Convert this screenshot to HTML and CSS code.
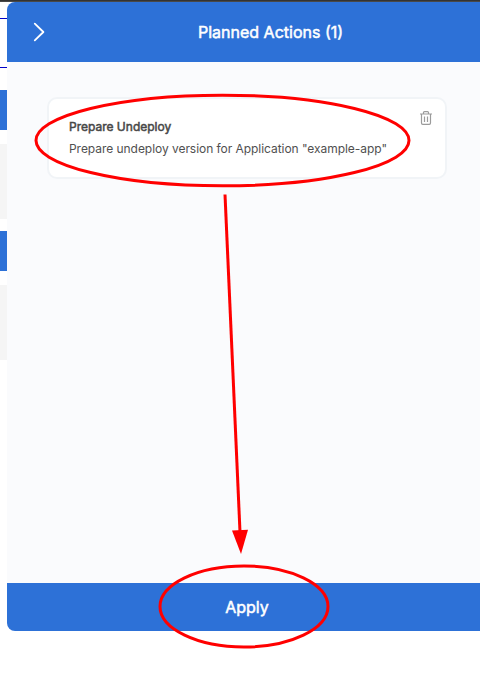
FILE: index.html
```html
<!DOCTYPE html>
<html lang="en">
<head>
<meta charset="utf-8">
<title>Planned Actions</title>
<link rel="stylesheet" href="styles.css">
</head>
<body>
<div class="window-edge"></div>
<div class="layout">
  <div class="page-behind">
    <div class="field"></div>
    <div class="block-head"></div>
    <div class="block-body"></div>
    <div class="block-head"></div>
    <div class="block-body"></div>
  </div>
  <section class="panel">
    <header class="panel-header">
      <svg class="chevron" width="12" height="20" viewBox="0 0 12 20"><path d="M1.8 1.6 L10.4 10 L1.8 18.4"/></svg>
      <h1 class="panel-title">Planned Actions (1)</h1>
    </header>
    <main class="panel-body">
      <article class="card">
        <div class="card-text">
          <h2 class="card-title">Prepare Undeploy</h2>
          <p class="card-description">Prepare undeploy version for Application "example-app"</p>
        </div>
        <svg class="trash" width="12" height="14" viewBox="0 0 12 14"><path d="M0 3h12M3.5 3V1.6q0-1 1-1h3q1 0 1 1V3M1.5 3v9q0 1.3 1.3 1.3h6.4q1.3 0 1.3-1.3V3M4.5 5.5v5.500M7.500 5.500v5.500"/></svg>
      </article>
    </main>
    <button class="apply">Apply</button>
  </section>
</div>
<svg class="annotations" width="480" height="694" viewBox="0 0 480 694">
  <ellipse cx="222.5" cy="140.5" rx="186.5" ry="45.3"/>
  <path d="M225 194.500L240 532"/>
  <path class="arrow-head" d="M232 530.500L248 529.700L241 554Z"/>
  <ellipse cx="244" cy="606.500" rx="84" ry="40.500"/>
</svg>
</body>
</html>
```
FILE: styles.css
```css
* { box-sizing: border-box; }
body {
  margin: 0;
  height: 694px;
  overflow: hidden;
  background: #fff;
  font-family: Inter, sans-serif;
}
.window-edge {
  height: 2px;
  background: #333;
  border-bottom: 1px solid #484848;
}
.layout { display: flex; height: 629px; }
.page-behind { width: 7px; flex: none; padding-top: 16px; }
.field {
  height: 50px;
  margin-bottom: 22px;
  border: solid #0000c8;
  border-width: 1px 0;
}
.block-head { height: 40px; background: #2d71d7; }
.block-body { height: 75px; margin: 14px 0 12px; background: #f5f5f5; }
.panel {
  flex: 1;
  display: flex;
  flex-direction: column;
  overflow: hidden;
  border-radius: 8px 0 0 8px;
  background: #fafbfd;
}
.panel-header {
  display: flex;
  align-items: center;
  height: 60px;
  padding-left: 26px;
  background: #2d71d7;
}
.chevron { fill: none; stroke: #fff; stroke-width: 1.8; stroke-linecap: round; stroke-linejoin: round; }
.panel-title {
  flex: 1;
  margin: 0;
  padding-left: 153px;
  color: #fff;
  font-size: 16px;
  font-weight: 400;
  line-height: 24px;
  -webkit-text-stroke: .5px currentColor;
  white-space: nowrap;
}
.panel-body { flex: 1; padding: 35px 33.5px 0 40px; }
.card {
  display: flex;
  justify-content: space-between;
  height: 82px;
  padding: 12px 12.5px 12px 20px;
  border: 2px solid #f1f4f7;
  border-radius: 10px;
  background: #fff;
}
.card-text { padding-top: 7px; white-space: nowrap; }
.card-title { margin: 0; color: #484848; font-size: 12px; font-weight: 400; line-height: 18px; -webkit-text-stroke: .5px currentColor; }
.card-description { margin: 4px 0 0; color: #505050; font-size: 12px; line-height: 18px; letter-spacing: -.045px; }
.trash { flex: none; fill: none; stroke: #9b9b9b; stroke-width: 1.2; }
.apply {
  height: 48px;
  padding: 0 0 0 7px;
  border: 0;
  background: #2d71d7;
  color: #fff;
  font: 400 16px/24px Inter, sans-serif;
  -webkit-text-stroke: .5px currentColor;
}
.annotations { position: absolute; top: 0; left: 0; fill: none; stroke: #f00; stroke-width: 3; pointer-events: none; }
.arrow-head { fill: #f00; stroke: none; }
```
